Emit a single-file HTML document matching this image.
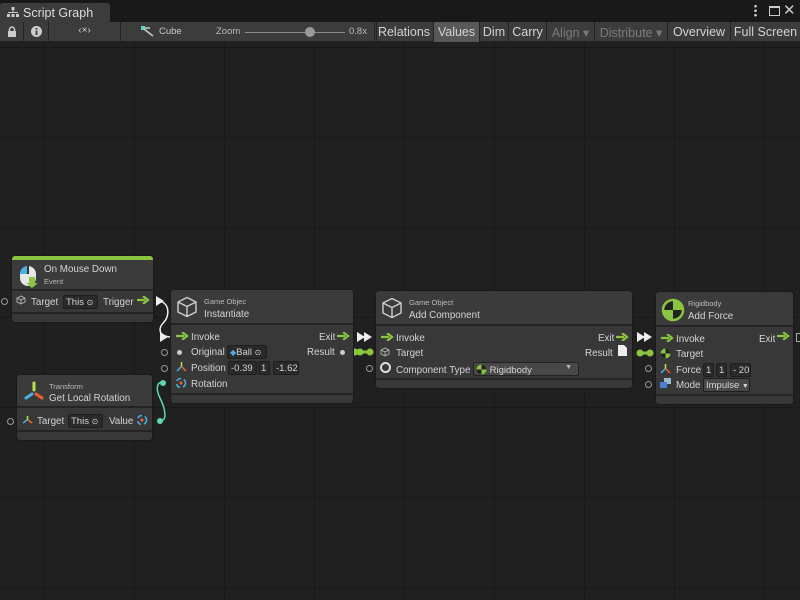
<!DOCTYPE html>
<html><head><meta charset="utf-8"><style>
*{box-sizing:border-box;margin:0;padding:0}
body{width:800px;height:600px;overflow:hidden;background:#202020;font-family:"Liberation Sans",sans-serif;color:#d2d2d2;position:relative}
.grid{position:absolute;left:0;top:42px;width:800px;height:558px;
background-image:linear-gradient(to right,#191919 1px,transparent 1px),linear-gradient(to bottom,#191919 1px,transparent 1px);
background-size:90px 90px;background-position:44px 5px}
.tabbar{position:absolute;left:0;top:0;width:800px;height:22px;background:#191919}
.tab{position:absolute;left:0;top:3px;width:110px;height:19px;background:#3c3c3c;border-radius:3px 3px 0 0;font-size:12.5px;color:#dcdcdc;padding:3px 0 0 23px}
.toolbar{position:absolute;left:0;top:22px;width:800px;height:20px;background:#3c3c3c;border-bottom:1px solid #232323}
.tb{position:absolute;top:0;height:20px;border-right:1px solid #232323;font-size:12.5px;color:#d2d2d2;padding-top:3px;text-align:center}
.tb.dis{color:#7a7a7a}
.node{position:absolute;background:#383838;border-radius:3px;box-shadow:0 0 0 1px #1a1a1a}
.hdr{position:absolute;left:0;right:0;top:0;background:#3b3b3b;border-bottom:2px solid #242424;border-radius:3px 3px 0 0}
.ftr{position:absolute;left:0;right:0;bottom:0;height:10px;border-top:2px solid #242424}
.t{position:absolute;font-size:9.8px;color:#d4d4d4;white-space:nowrap}
.s{position:absolute;font-size:7.5px;color:#bbb;white-space:nowrap}
.fld{position:absolute;background:#2a2a2a;border:1px solid #1e1e1e;border-radius:2px;font-size:9.5px;color:#d4d4d4;padding:1px 2px;height:14px;white-space:nowrap}
.port{position:absolute;width:7px;height:7px;border:1px solid #999;border-radius:50%}
.ga{position:absolute;width:13px;height:8px}
</style></head><body>
<div class="grid"></div>
<div class="tabbar">
 <div class="tab"><svg style="position:absolute;left:7px;top:4px" width="12" height="11"><rect x="4.5" y="0" width="3" height="3" fill="#ccc"/><rect x="5.5" y="3" width="1" height="3" fill="#ccc"/><rect x="1" y="5" width="10" height="1" fill="#ccc"/><rect x="0" y="7" width="3" height="3" fill="#ccc"/><rect x="4.5" y="7" width="3" height="3" fill="#ccc"/><rect x="9" y="7" width="3" height="3" fill="#ccc"/></svg>Script Graph</div>
 <div style="position:absolute;left:754px;top:4px;width:3px;height:13px;background:radial-gradient(circle,#ccc 1.2px,transparent 1.5px) 0 0/3px 4.5px"></div>
 <div style="position:absolute;left:769px;top:6px;width:11px;height:10px;border:1.5px solid #ccc;border-top-width:2.5px"></div>
 <div style="position:absolute;left:783px;top:1px;font-size:15px;color:#ccc">✕</div>
</div>
<div class="toolbar">
 <div class="tb" style="left:0;width:24px"><svg width="10" height="11" style="margin-top:1px"><rect x="1" y="5" width="8" height="6" fill="#ccc"/><path d="M2.5 5V3.5a2.5 2.5 0 0 1 5 0V5" stroke="#ccc" stroke-width="1.5" fill="none"/></svg></div>
 <div class="tb" style="left:24px;width:25px"><svg width="11" height="11" style="margin-top:1px"><circle cx="5.5" cy="5.5" r="5.5" fill="#ccc"/><rect x="4.6" y="4.5" width="1.8" height="4.5" fill="#3c3c3c"/><rect x="4.6" y="2" width="1.8" height="1.6" fill="#3c3c3c"/></svg></div>
 <div class="tb" style="left:49px;width:72px;font-size:10px">‹×›</div>
 <div class="tb" style="left:121px;width:256px"></div>
 <svg style="position:absolute;left:141px;top:4px" width="13" height="11"><rect x="0" y="0" width="4" height="4" fill="#5fd6c4"/><path d="M3 3l9 7M4 2h5" stroke="#ccc" stroke-width="1.5"/></svg>
 <div style="position:absolute;left:159px;top:4px;font-size:9.5px;color:#ccc">Cube</div>
 <div style="position:absolute;left:216px;top:4px;font-size:9.5px;color:#bbb">Zoom</div>
 <div style="position:absolute;left:245px;top:10px;width:100px;height:1px;background:#8a8a8a"></div>
 <div style="position:absolute;left:305px;top:5px;width:10px;height:10px;border-radius:50%;background:#999"></div>
 <div style="position:absolute;left:349px;top:4px;font-size:9.5px;color:#bbb">0.8x</div>
 <div class="tb" style="left:374px;width:60px;border-left:1px solid #232323">Relations</div>
 <div class="tb" style="left:434px;width:46px;background:#585858">Values</div>
 <div class="tb" style="left:480px;width:29px">Dim</div>
 <div class="tb" style="left:509px;width:38px">Carry</div>
 <div class="tb dis" style="left:547px;width:48px">Align ▾</div>
 <div class="tb dis" style="left:595px;width:73px">Distribute ▾</div>
 <div class="tb" style="left:668px;width:63px">Overview</div>
 <div class="tb" style="left:731px;width:69px;border-right:none">Full Screen</div>
</div>

<svg style="position:absolute;left:0;top:0" width="800" height="600">
 <path d="M157 301 C170 301,170 316,164 322 C158 328,158 336,170 337" stroke="#eee" stroke-width="1.5" fill="none"/>
 <path d="M160 421 C168 421,165 408,160 398 C156 390,156 382,163 382" stroke="#5fd6b4" stroke-width="1.5" fill="none"/>
 <circle cx="160" cy="421" r="3" fill="#5fd6b4"/><circle cx="163" cy="383" r="3" fill="#5fd6b4"/>
 <path d="M156 296l8 5-8 5z" fill="#eee"/><path d="M160 332l8 5-8 5z" fill="#eee"/>
 <path d="M357 332l8 5-8 5zM364 332l8 5-8 5z" fill="#eee"/><path d="M357 337h8" stroke="#eee" stroke-width="2"/>
 <path d="M637 332l8 5-8 5zM644 332l8 5-8 5z" fill="#eee"/><path d="M637 337h8" stroke="#eee" stroke-width="2"/>
 <path d="M360 352h10" stroke="#8bc53f" stroke-width="3"/><circle cx="360" cy="352" r="3.5" fill="#8bc53f"/><circle cx="370" cy="352" r="3.5" fill="#8bc53f"/>
 <path d="M640 353h10" stroke="#8bc53f" stroke-width="3"/><circle cx="640" cy="353" r="3.5" fill="#8bc53f"/><circle cx="650" cy="353" r="3.5" fill="#8bc53f"/>
 <circle cx="355" cy="352" r="3.5" fill="#8bc53f"/>
</svg>

<div class="node" style="left:12px;top:256px;width:141px;height:66px">
 <div class="hdr" style="height:35px;border-top:4px solid #8bc53f">
  <svg style="position:absolute;left:6px;top:4px" width="22" height="24"><path d="M2 10a8 8 0 0 1 16 0v4a8 8 0 0 1-16 0z" fill="#e6e6e6"/><path d="M2 10a8 8 0 0 1 8-8v8z" fill="#4ab0e8"/><rect x="9" y="2" width="2" height="8" fill="#333"/><path d="M11 13h6v6h3l-6 5-6-5h3z" fill="#8bc53f"/></svg>
  <div class="t" style="left:32px;top:4px">On Mouse Down</div>
  <div class="s" style="left:32px;top:17px">Event</div>
 </div>
 <svg style="position:absolute;left:4px;top:39px" width="10" height="10"><path d="M5 1l4 2v4l-4 2-4-2V3zM1 3l4 2 4-2M5 5v4" stroke="#aaa" fill="none"/></svg>
 <div class="t" style="left:19px;top:41px">Target</div>
 <div class="fld" style="left:51px;top:39px;width:35px">This <span style="font-size:8px">⊙</span></div>
 <div class="t" style="left:91px;top:41px">Trigger</div>
 <svg class="ga" style="left:125px;top:40px"><path d="M0 4h8M6 0l5 4-5 4" stroke="#8bc53f" stroke-width="2.2" fill="none"/></svg>
 <div class="ftr"></div>
</div>
<div class="port" style="left:1px;top:298px"></div>

<div class="node" style="left:17px;top:375px;width:135px;height:65px">
 <div class="hdr" style="height:33px">
  <svg style="position:absolute;left:6px;top:6px" width="22" height="22"><path d="M11 2v7" stroke="#b8e04a" stroke-width="3" stroke-linecap="round"/><path d="M9 13l-6 4" stroke="#4ab0e8" stroke-width="3" stroke-linecap="round"/><path d="M13 13l6 4" stroke="#f06030" stroke-width="3" stroke-linecap="round"/></svg>
  <div class="s" style="left:32px;top:7px">Transform</div>
  <div class="t" style="left:32px;top:18px">Get Local Rotation</div>
 </div>
 <svg style="position:absolute;left:5px;top:40px" width="11" height="10"><path d="M5.5 1v4" stroke="#b8e04a" stroke-width="1.5"/><path d="M5 5l-4 3" stroke="#4ab0e8" stroke-width="1.5"/><path d="M6 5l4 3" stroke="#f06030" stroke-width="1.5"/></svg>
 <div class="t" style="left:20px;top:41px">Target</div>
 <div class="fld" style="left:51px;top:39px;width:35px">This <span style="font-size:8px">⊙</span></div>
 <div class="t" style="left:92px;top:41px">Value</div>
 <svg style="position:absolute;left:119px;top:39px" width="12" height="12"><circle cx="6" cy="6" r="4.5" stroke="#4ab0e8" stroke-width="1.5" fill="none" stroke-dasharray="5 3"/><circle cx="6" cy="6" r="1.5" fill="#f06030"/></svg>
 <div class="ftr"></div>
</div>
<div class="port" style="left:7px;top:418px"></div>

<div class="node" style="left:171px;top:290px;width:182px;height:113px">
 <div class="hdr" style="height:35px">
  <svg style="position:absolute;left:5px;top:6px" width="22" height="22"><path d="M11 1.5l9 4.5v10l-9 4.5-9-4.5V6zM2 6l9 4.5L20 6M11 10.5v10" stroke="#cfcfcf" stroke-width="1.4" fill="none" stroke-linejoin="round"/></svg>
  <div class="s" style="left:33px;top:7px">Game Objec</div>
  <div class="t" style="left:33px;top:19px">Instantiate</div>
 </div>
 <svg class="ga" style="left:5px;top:42px"><path d="M0 4h8M6 0l5 4-5 4" stroke="#8bc53f" stroke-width="2.2" fill="none"/></svg>
 <div class="t" style="left:20px;top:42px">Invoke</div>
 <div class="t" style="left:148px;top:42px">Exit</div>
 <svg class="ga" style="left:166px;top:42px"><path d="M0 4h8M6 0l5 4-5 4" stroke="#8bc53f" stroke-width="2.2" fill="none"/></svg>
 <div style="position:absolute;left:6px;top:60px;width:5px;height:5px;border-radius:50%;background:#ccc"></div>
 <div class="t" style="left:20px;top:57px">Original</div>
 <div class="fld" style="left:56px;top:55px;width:40px"><span style="color:#4ab0e8;font-size:8px">◆</span>Ball <span style="font-size:8px">⊙</span></div>
 <div class="t" style="left:136px;top:57px">Result</div>
 <div style="position:absolute;left:169px;top:60px;width:5px;height:5px;border-radius:50%;background:#ccc"></div>
 <svg style="position:absolute;left:5px;top:71px" width="11" height="11"><path d="M5.5 1v5" stroke="#b8e04a" stroke-width="1.5"/><path d="M5 6l-4 4" stroke="#4ab0e8" stroke-width="1.5"/><path d="M6 6l4 4" stroke="#f06030" stroke-width="1.5"/></svg>
 <div class="t" style="left:20px;top:73px">Position</div>
 <div class="fld" style="left:57px;top:71px;width:29px">-0.39</div>
 <div class="fld" style="left:87px;top:71px;width:12px">1</div>
 <div class="fld" style="left:102px;top:71px;width:26px">-1.62</div>
 <svg style="position:absolute;left:4px;top:87px" width="12" height="12"><circle cx="6" cy="6" r="4.5" stroke="#4ab0e8" stroke-width="1.5" fill="none" stroke-dasharray="5 3"/><circle cx="6" cy="6" r="1.5" fill="#f06030"/></svg>
 <div class="t" style="left:20px;top:89px">Rotation</div>
 <div class="ftr"></div>
</div>
<div class="port" style="left:161px;top:349px"></div>
<div class="port" style="left:161px;top:365px"></div>

<div class="node" style="left:376px;top:291px;width:256px;height:97px">
 <div class="hdr" style="height:35px">
  <svg style="position:absolute;left:5px;top:6px" width="22" height="22"><path d="M11 1.5l9 4.5v10l-9 4.5-9-4.5V6zM2 6l9 4.5L20 6M11 10.5v10" stroke="#cfcfcf" stroke-width="1.4" fill="none" stroke-linejoin="round"/></svg>
  <div class="s" style="left:33px;top:7px">Game Object</div>
  <div class="t" style="left:33px;top:19px">Add Component</div>
 </div>
 <svg class="ga" style="left:5px;top:42px"><path d="M0 4h8M6 0l5 4-5 4" stroke="#8bc53f" stroke-width="2.2" fill="none"/></svg>
 <div class="t" style="left:20px;top:42px">Invoke</div>
 <div class="t" style="left:222px;top:42px">Exit</div>
 <svg class="ga" style="left:240px;top:42px"><path d="M0 4h8M6 0l5 4-5 4" stroke="#8bc53f" stroke-width="2.2" fill="none"/></svg>
 <svg style="position:absolute;left:4px;top:56px" width="10" height="10"><path d="M5 1l4 2v4l-4 2-4-2V3zM1 3l4 2 4-2M5 5v4" stroke="#aaa" fill="none"/></svg>
 <div class="t" style="left:20px;top:57px">Target</div>
 <div class="t" style="left:209px;top:57px">Result</div>
 <svg style="position:absolute;left:242px;top:54px" width="9" height="11"><path d="M0 0h6l3 3v8H0z" fill="#eee"/></svg>
 <div style="position:absolute;left:4px;top:71px;width:11px;height:11px;border:2px solid #ddd;border-radius:50%"></div>
 <div class="t" style="left:20px;top:74px">Component Type</div>
 <div class="fld" style="left:97px;top:71px;width:106px;background:#484848;border-color:#222"><svg width="11" height="11" style="vertical-align:-2px"><circle cx="5.5" cy="5.5" r="5" fill="#8bc53f"/><path d="M5.5 .5v5h5A5 5 0 0 0 5.5 .5zM5.5 5.5v5a5 5 0 0 1-5-5z" fill="#222"/></svg> Rigidbody<span style="position:absolute;right:6px;top:1px;font-size:7px;color:#bbb">▼</span></div>
 <div class="ftr"></div>
</div>
<div class="port" style="left:366px;top:365px"></div>

<div class="node" style="left:656px;top:292px;width:137px;height:112px">
 <div class="hdr" style="height:35px">
  <svg style="position:absolute;left:5px;top:6px" width="24" height="24"><circle cx="12" cy="12" r="10" fill="#222" stroke="#8bc53f" stroke-width="2.5"/><path d="M12 2v10h10A10 10 0 0 0 12 2zM12 12v10A10 10 0 0 1 2 12z" fill="#8bc53f"/></svg>
  <div class="s" style="left:32px;top:7px">Rigidbody</div>
  <div class="t" style="left:32px;top:19px">Add Force</div>
 </div>
 <svg class="ga" style="left:5px;top:42px"><path d="M0 4h8M6 0l5 4-5 4" stroke="#8bc53f" stroke-width="2.2" fill="none"/></svg>
 <div class="t" style="left:20px;top:42px">Invoke</div>
 <div class="t" style="left:103px;top:42px">Exit</div>
 <svg class="ga" style="left:121px;top:40px"><path d="M0 4h8M6 0l5 4-5 4" stroke="#8bc53f" stroke-width="2.2" fill="none"/></svg>
 <svg style="position:absolute;left:4px;top:56px" width="11" height="11"><circle cx="5.5" cy="5.5" r="5" fill="#8bc53f"/><path d="M5.5 .5v5h5A5 5 0 0 0 5.5 .5zM5.5 5.5v5a5 5 0 0 1-5-5z" fill="#222"/></svg>
 <div class="t" style="left:20px;top:57px">Target</div>
 <svg style="position:absolute;left:4px;top:71px" width="11" height="11"><path d="M5.5 1v5" stroke="#b8e04a" stroke-width="1.5"/><path d="M5 6l-4 4" stroke="#4ab0e8" stroke-width="1.5"/><path d="M6 6l4 4" stroke="#f06030" stroke-width="1.5"/></svg>
 <div class="t" style="left:20px;top:73px">Force</div>
 <div class="fld" style="left:47px;top:71px;width:11px">1</div>
 <div class="fld" style="left:60px;top:71px;width:11px">1</div>
 <div class="fld" style="left:74px;top:71px;width:21px">- 20</div>
 <svg style="position:absolute;left:4px;top:86px" width="12" height="11"><rect x="4" y="0" width="7" height="6" fill="#9bc"/><rect x="0" y="4" width="7" height="6" fill="#4a7fd0"/></svg>
 <div class="t" style="left:20px;top:88px">Mode</div>
 <div class="fld" style="left:47px;top:86px;width:47px;background:#484848">Impulse <span style="font-size:7px">▼</span></div>
 <div class="ftr"></div>
</div>
<div class="port" style="left:645px;top:365px"></div>
<div class="port" style="left:645px;top:381px"></div>
<div style="position:absolute;left:796px;top:333px;width:6px;height:9px;border:1px solid #aaa"></div>
</body></html>
